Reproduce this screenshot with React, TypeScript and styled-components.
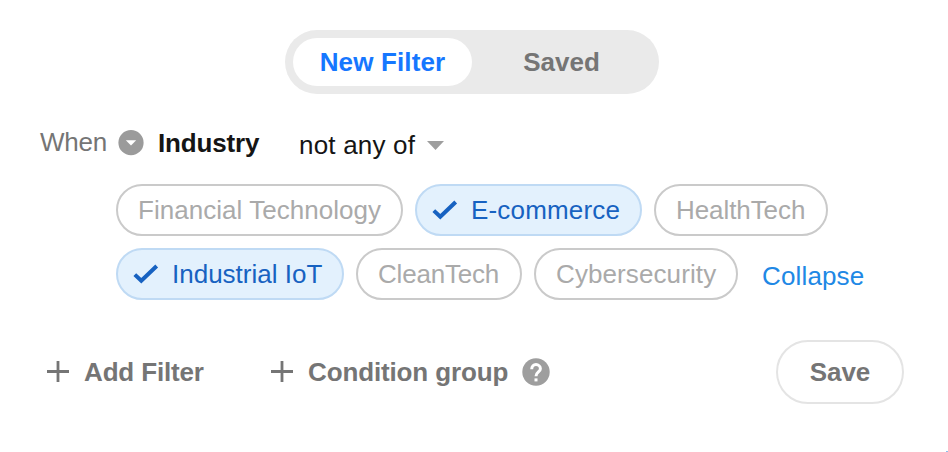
import React from "react";
import styled, { createGlobalStyle } from "styled-components";

const GlobalStyle = createGlobalStyle`
  * { box-sizing: border-box; }
  body {
    margin: 0;
    background: #fff;
    overflow: hidden;
    font-family: "Liberation Sans", Arial, sans-serif;
    font-size: 26px;
    line-height: 30px;
  }
  button { font: inherit; border: 0; background: none; padding: 0; cursor: pointer; }
`;

const Panel = styled.main`
  position: relative;
  width: 948px;
  height: 452px;
  padding: 30px 44px 0 40px;
  overflow: hidden;
  display: flex;
  flex-direction: column;
  white-space: nowrap;
`;

const Tabs = styled.div`
  display: flex;
  width: 374px;
  height: 64px;
  margin-left: 245px;
  padding: 8px;
  border-radius: 32px;
  background: #eaeaea;
`;

const Tab = styled.button<{ $active?: boolean }>`
  width: 179px;
  height: 48px;
  border-radius: 24px;
  font-weight: 700;
  color: ${(p) => (p.$active ? "#1677ff" : "#757575")};
  background: ${(p) => (p.$active ? "#fff" : "transparent")};
`;

const Condition = styled.div`
  display: flex;
  align-items: flex-start;
  height: 40px;
  margin-top: 33px;
`;

const When = styled.span`
  width: 78px;
  color: #757575;
`;

const RoundIcon = styled.svg`
  display: block;
  width: 26px;
  height: 26px;
  margin-top: 3px;
`;

const Field = styled.span`
  width: 141px;
  margin: 1px 0 0 14px;
  font-weight: 700;
  color: #151515;
`;

const Operator = styled.button`
  display: flex;
  align-items: center;
  gap: 12px;
  margin-top: 3px;
  color: #151515;
`;

const Chips = styled.div`
  display: flex;
  flex-wrap: wrap;
  gap: 12px;
  margin: 17px 0 0 76px;
`;

const Chip = styled.button<{ $width: number; $selected?: boolean }>`
  display: flex;
  align-items: center;
  width: ${(p) => p.$width}px;
  height: 52px;
  padding-left: ${(p) => (p.$selected ? 14 : 20)}px;
  border: 2px solid ${(p) => (p.$selected ? "#bfdaf4" : "#cacaca")};
  border-radius: 26px;
  background: ${(p) => (p.$selected ? "#e3f1fd" : "#fff")};
  color: ${(p) => (p.$selected ? "#1762c1" : "#aaa")};
`;

const CheckIcon = styled.svg`
  width: 28px;
  height: 24px;
  margin-right: 12px;
`;

const Collapse = styled.button`
  height: 30px;
  margin: 13px 0 0 12px;
  color: #2088e5;
`;

const Footer = styled.footer`
  display: flex;
  align-items: center;
  height: 64px;
  margin-top: 40px;
`;

const AddButton = styled.button<{ $width: number }>`
  display: flex;
  align-items: center;
  width: ${(p) => p.$width}px;
  font-weight: 700;
  color: #757575;
`;

const PlusIcon = styled.svg`
  width: 22px;
  height: 22px;
  margin: 0 15px 0 7px;
`;

const HelpIcon = styled.svg`
  width: 28px;
  height: 28px;
  margin-left: 14px;
`;

const Save = styled.button`
  width: 128px;
  height: 64px;
  margin-left: auto;
  border: 2px solid #e4e4e4;
  border-radius: 32px;
  font-weight: 700;
  color: #757575;
`;

const CornerDot = styled.span`
  position: absolute;
  right: 0;
  bottom: 0;
  width: 2px;
  height: 1px;
  background: #8fbdea;
`;

const Label = styled.span<{ $spacing?: number }>`
  letter-spacing: ${(p) => p.$spacing ?? 0}px;
`;

const industries = [
  { name: "Financial Technology", width: 287, spacing: 0.04 },
  { name: "E-commerce", width: 227, spacing: 0.18, selected: true },
  { name: "HealthTech", width: 174, spacing: -0.08 },
  { name: "Industrial IoT", width: 228, spacing: 0, selected: true },
  { name: "CleanTech", width: 166, spacing: -0.2 },
  { name: "Cybersecurity", width: 204, spacing: 0.1 },
];

const Plus = () => (
  <PlusIcon viewBox="0 0 22 22" fill="none" stroke="#757575" strokeWidth="2.8">
    <path d="M0 10.5H22M11 0V21" />
  </PlusIcon>
);

export default function App() {
  return (
    <>
      <GlobalStyle />
      <Panel>
        <Tabs>
          <Tab $active><Label $spacing={0.15}>New Filter</Label></Tab>
          <Tab><Label>Saved</Label></Tab>
        </Tabs>
        <Condition>
          <When><Label $spacing={-0.25}>When</Label></When>
          <RoundIcon viewBox="0 0 26 26">
            <circle cx="13" cy="12.7" r="12.6" fill="#9b9b9b" />
            <path d="M7.8 10.2H18.2L13 15.4Z" fill="#fff" />
          </RoundIcon>
          <Field><Label $spacing={-0.15}>Industry</Label></Field>
          <Operator>
            <Label $spacing={0.2}>not any of</Label>
            <svg width="17" height="9" viewBox="0 0 17 9">
              <path d="M0 0H17L8.5 9Z" fill="#9e9e9e" />
            </svg>
          </Operator>
        </Condition>
        <Chips>
          {industries.map((item) => (
            <Chip key={item.name} $width={item.width} $selected={item.selected}>
              {item.selected && (
                <CheckIcon viewBox="0 0 28 24" fill="none" stroke="#1762c1" strokeWidth="4">
                  <path d="M2.8 12.6L9.3 18.8L24.7 4" />
                </CheckIcon>
              )}
              <Label $spacing={item.spacing}>{item.name}</Label>
            </Chip>
          ))}
          <Collapse><Label $spacing={0.15}>Collapse</Label></Collapse>
        </Chips>
        <Footer>
          <AddButton $width={224}><Plus /><Label $spacing={-0.15}>Add Filter</Label></AddButton>
          <AddButton $width={300}>
            <Plus />
            <Label $spacing={-0.13}>Condition group</Label>
            <HelpIcon viewBox="0 0 28 28">
              <circle cx="14" cy="14" r="13.7" fill="#9e9e9e" />
              <path d="M9.7 11.2C9.7 8.2 11.6 6.6 14 6.6S18.4 8.3 18.4 10.7C18.4 14 14 14 14 18.2" fill="none" stroke="#fff" strokeWidth="3" />
              <rect x="12.5" y="20.4" width="3" height="3" fill="#fff" />
            </HelpIcon>
          </AddButton>
          <Save><Label $spacing={-0.1}>Save</Label></Save>
        </Footer>
        <CornerDot />
      </Panel>
    </>
  );
}
